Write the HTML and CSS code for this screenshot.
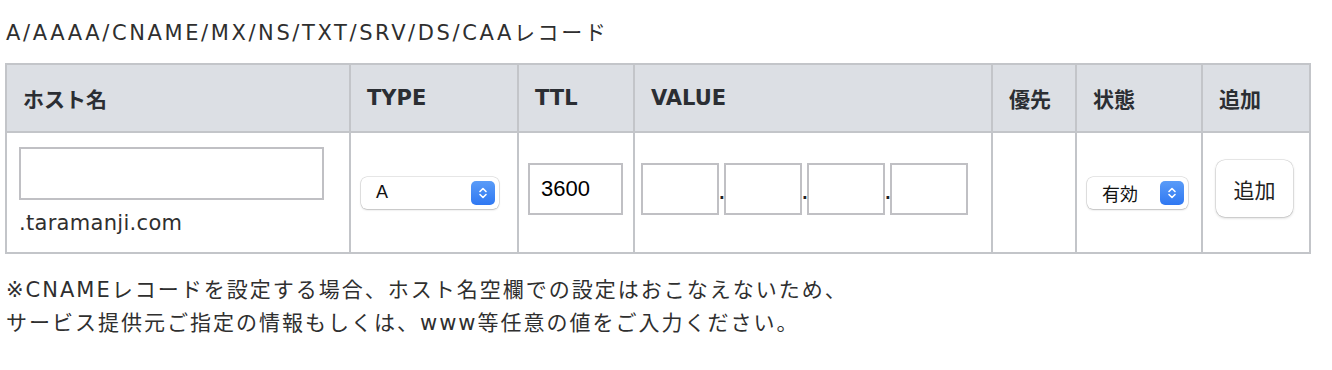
FILE: index.html
```html
<!DOCTYPE html>
<html lang="ja">
<head>
  <meta charset="UTF-8">
  <title>DNSレコード設定</title>
  <link rel="stylesheet" href="styles.css">
</head>
<body>
  <p class="title">A/AAAA/CNAME/MX/NS/TXT/SRV/DS/CAAレコード</p>

  <table class="records">
    <colgroup>
      <col class="c-host">
      <col class="c-type">
      <col class="c-ttl">
      <col class="c-value">
      <col class="c-prio">
      <col class="c-status">
      <col class="c-add">
    </colgroup>
    <tr>
      <th>ホスト名</th>
      <th>TYPE</th>
      <th>TTL</th>
      <th>VALUE</th>
      <th>優先</th>
      <th>状態</th>
      <th>追加</th>
    </tr>
    <tr>
      <td class="cell-host">
        <input type="text" class="host-input">
        <div class="domain">.taramanji.com</div>
      </td>
      <td class="cell-type">
        <div class="fake-select type-select">
          <span>A</span>
          <span class="arrows">
            <svg width="10" height="16" viewBox="0 0 10 16"><path d="M2 6.5 L5 3.5 L8 6.5 M2 9.5 L5 12.5 L8 9.5" fill="none" stroke="#fff" stroke-width="1.6" stroke-linecap="round" stroke-linejoin="round"/></svg>
          </span>
        </div>
      </td>
      <td class="cell-ttl">
        <input type="text" class="ttl-input" value="3600">
      </td>
      <td class="cell-value">
        <div class="ip">
          <input type="text" class="octet"><span class="dot">.</span><input type="text" class="octet"><span class="dot">.</span><input type="text" class="octet"><span class="dot">.</span><input type="text" class="octet">
        </div>
      </td>
      <td></td>
      <td class="cell-status">
        <div class="fake-select status-select">
          <span>有効</span>
          <span class="arrows">
            <svg width="10" height="16" viewBox="0 0 10 16"><path d="M2 6.5 L5 3.5 L8 6.5 M2 9.5 L5 12.5 L8 9.5" fill="none" stroke="#fff" stroke-width="1.6" stroke-linecap="round" stroke-linejoin="round"/></svg>
          </span>
        </div>
      </td>
      <td class="cell-add">
        <button class="add-btn">追加</button>
      </td>
    </tr>
  </table>

  <p class="note">※CNAMEレコードを設定する場合、ホスト名空欄での設定はおこなえないため、<br>サービス提供元ご指定の情報もしくは、www等任意の値をご入力ください。</p>
</body>
</html>
```

FILE: styles.css
```css
body {
  font-family: "DejaVu Sans", "Noto Sans CJK JP", sans-serif;
  margin: 0 5px;
  color: #2f2f2f;
  background: #fff;
}

.title {
  margin: 0;
  padding-top: 17px;
  line-height: 32px;
  font-size: 21px;
  letter-spacing: 2.6px;
  margin-bottom: 14px;
  padding-left: 1px;
}

.records {
  border-collapse: collapse;
  table-layout: fixed;
  width: 1304px;
}

.c-host { width: 344px; }
.c-type { width: 168px; }
.c-ttl { width: 116px; }
.c-value { width: 358px; }
.c-prio { width: 84px; }
.c-status { width: 126px; }
.c-add { width: 108px; }

th, td {
  border: 2px solid #c3c5c9;
  text-align: left;
  vertical-align: middle;
}

th {
  background: #dcdfe4;
  height: 66px;
  padding: 0 16px;
  font-size: 21px;
  font-weight: bold;
  color: #2b2e33;
}

td {
  height: 119px;
  padding: 0 10px;
}

input {
  box-sizing: border-box;
  border: 2px solid #c0c0c4;
  background: #fff;
  font-family: "Liberation Sans", "Noto Sans CJK JP", sans-serif;
  font-size: 22px;
  color: #000;
  outline: none;
  margin: 0;
}

.cell-host {
  padding-left: 12px;
}

.host-input {
  display: block;
  width: 305px;
  height: 53px;
  padding: 0 8px;
}

.domain {
  font-size: 21px;
  letter-spacing: 0.3px;
  line-height: 24px;
  margin-top: 11px;
  margin-bottom: 4px;
}

.fake-select {
  box-sizing: border-box;
  display: flex;
  align-items: center;
  justify-content: space-between;
  height: 32px;
  background: #fff;
  border-radius: 6px;
  box-shadow: 0 0 0 0.5px rgba(0, 0, 0, 0.18), 0 1px 2px rgba(0, 0, 0, 0.18);
  font-family: "Liberation Sans", "Noto Sans CJK JP", sans-serif;
  font-size: 18px;
  color: #111;
  padding: 0 4px 0 15px;
}

.type-select {
  width: 138px;
}

.status-select {
  width: 101px;
}

.arrows {
  width: 24px;
  height: 24px;
  border-radius: 5px;
  background: linear-gradient(#5a9cf8, #2f78f2);
  display: flex;
  align-items: center;
  justify-content: center;
}

.cell-ttl {
  padding-left: 9px;
}

.ttl-input {
  width: 95px;
  height: 52px;
  padding: 0 11px;
  margin-bottom: 8px;
}

.cell-value {
  padding-left: 6px;
}

.ip {
  display: flex;
  align-items: center;
  margin-bottom: 8px;
}

.octet {
  width: 78px;
  height: 52px;
}

.dot {
  width: 5px;
  text-align: center;
  font-size: 15px;
  font-weight: bold;
  color: #222;
  margin-top: 10px;
}

.cell-add {
  padding-left: 13px;
}

.add-btn {
  width: 77px;
  height: 57px;
  background: #fff;
  border: none;
  border-radius: 9px;
  box-shadow: 0 0 0 0.5px rgba(0, 0, 0, 0.15), 0 1px 3px rgba(0, 0, 0, 0.2);
  font-family: "Noto Sans CJK JP", sans-serif;
  font-size: 21px;
  color: #222;
  cursor: pointer;
  margin-top: -8px;
}

.note {
  margin: 20px 0 0;
  padding-left: 1px;
  font-size: 21px;
  letter-spacing: 2px;
  line-height: 33px;
}
```
